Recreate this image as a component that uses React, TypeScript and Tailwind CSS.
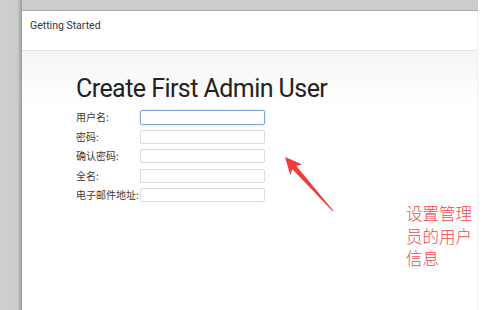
import React from "react";

const FIELDS = ["用户名:", "密码:", "确认密码:", "全名:", "电子邮件地址:"];

export default function App() {
  return (
    <div className="relative w-[500px] h-[310px] overflow-hidden bg-white font-['Roboto','Noto_Sans_CJK_SC',sans-serif]">
      <div className="flex h-[310px]">
        {/* grey backdrop on the left */}
        <div className="w-[22px] shrink-0 bg-gradient-to-r from-[#d0d0d0] via-[#cbcbcb] via-80% to-[#9a9a9a]" />
        <div className="flex flex-col flex-1">
          <div className="h-[11px] w-[456px] bg-[#cccccc] border-b border-[#a9a9a9]" />
          <div className="w-[456px] flex-1 bg-white border-r border-[#eeeeee]">
            <div className="h-[40px] border-b border-[#e2e2e2] pl-[8px] pt-[8px] text-[10.5px] leading-[14px] text-[#333333]">
              Getting Started
            </div>
            <div className="bg-gradient-to-b from-[#f5f5f5] to-white pt-[23px] pl-[54px]">
              <h1 className="text-[25px] leading-[30px] text-[#222222] tracking-[-0.55px]">
                Create First Admin User
              </h1>
            </div>
            <div className="pl-[54px] pt-[6px] flex flex-col gap-[5.6px] font-['Noto_Sans_CJK_SC',sans-serif]">
              {FIELDS.map((label, i) => (
                <div key={label} className="flex items-center h-[14px]">
                  <span className="w-[64px] text-[10px] leading-[14px] text-[#3a3a3a] whitespace-nowrap">
                    {label}
                  </span>
                  <div
                    className={
                      i === 0
                        ? "w-[125px] h-[15px] rounded-[2px] border border-[#7ea6dc] shadow-[0_0_2px_#a9c4ea]"
                        : "w-[125px] h-[14px] rounded-[2px] border border-[#dcdcdc]"
                    }
                  />
                </div>
              ))}
            </div>
          </div>
        </div>
      </div>

      {/* annotation overlay */}
      <svg className="absolute left-0 top-0" width="500" height="310">
        <polygon
          points="285,157 302.3,164.4 296.2,165.8 333.4,210.7 332.6,211.3 292.4,169.2 290.3,175"
          fill="#f23c3c"
        />
      </svg>
      <p className="absolute left-[406px] top-[202px] w-[72px] text-[16.5px] leading-[22.5px] text-[#f04848] font-['Noto_Sans_CJK_SC',sans-serif] font-light">
        设置管理员的用户信息
      </p>
    </div>
  );
}
